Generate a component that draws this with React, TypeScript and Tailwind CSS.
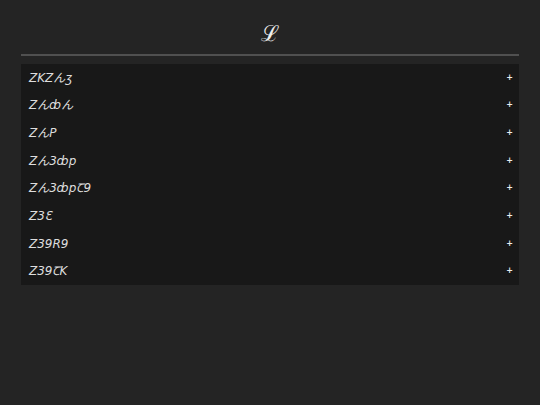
import React, { useState } from 'react';

const entries = ['ZKZんʒ', 'Zんȸん', 'ZんP', 'Zん3ȸp', 'Zん3ȸpꞆ9', 'Z3Ɛ', 'Z39R9', 'Z39ꞆK'];

export default function App() {
  const [selected, setSelected] = useState<number | null>(null);

  return (
    <div className="min-h-screen bg-[#242424] px-[21px] pt-[14px] font-['DejaVu_Sans','Noto_Sans_CJK_JP',sans-serif] text-[#eeeeee]">
      <header className="flex h-[42px] items-center justify-center border-b-2 border-[#505050]">
        <h1 className="text-[22px] leading-8 font-extralight">ℒ</h1>
      </header>

      <ul className="mt-2 grid min-h-[221px] auto-rows-fr bg-[#181818]">
        {entries.map((entry, index) => (
          <li key={entry} className="grid">
            <button
              type="button"
              aria-pressed={selected === index}
              onClick={() => setSelected(selected === index ? null : index)}
              className="flex items-center justify-between pr-1.5 pl-2 text-left"
            >
              <span className="text-xs font-normal italic text-[#dddddd]">{entry}</span>
              <span className="text-[8px] leading-4 font-bold">+</span>
            </button>
          </li>
        ))}
      </ul>
    </div>
  );
}
